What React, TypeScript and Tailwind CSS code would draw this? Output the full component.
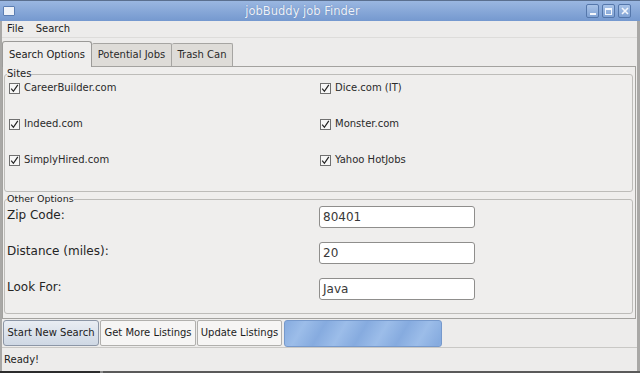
const sites = [
  ["CareerBuilder.com", "Dice.com (IT)"],
  ["Indeed.com", "Monster.com"],
  ["SimplyHired.com", "Yahoo HotJobs"],
];

const options = [
  { label: "Zip Code:", value: "80401" },
  { label: "Distance (miles):", value: "20" },
  { label: "Look For:", value: "Java" },
];

function CheckBox({ label }: { label: string }) {
  return (
    <label className="flex items-center gap-[4px] h-[16px] text-[10px] leading-[12px] text-[#2a2a2a]">
      <svg width="11" height="11" viewBox="0 0 11 11" className="shrink-0">
        <rect x="0.5" y="0.5" width="10" height="10" fill="#f7f7f7" stroke="#707070" />
        <path d="M2.2 5.6 L4.4 8.3 L8.8 1.8" fill="none" stroke="#222" strokeWidth="1.2" />
      </svg>
      {label}
    </label>
  );
}

function WinButton({ children }: { children: React.ReactNode }) {
  return (
    <div className="w-[13px] h-[14px] rounded-[2px] border border-[#5577ab] bg-linear-to-b from-[#a9c3e8] to-[#80a2d4] flex items-center justify-center">
      {children}
    </div>
  );
}

export default function App() {
  return (
    <div className="w-[640px] h-[373px] bg-[#edeceb] flex flex-col overflow-hidden font-['DejaVu_Sans',sans-serif] text-[#1c1c1c]">
      {/* title bar */}
      <div className="h-[21px] shrink-0 flex items-center bg-linear-to-b from-[#9ab7e1] to-[#7599cf] border-t border-[#5a6f8f] px-[3px]">
        <div className="w-[12px] h-[10px] border border-[#5b7eb3] bg-[#eef2f8] rounded-[1px]" />
        <div className="flex-1 text-center text-[11.5px] leading-[14px] text-[#eef2fa] [text-shadow:0_0_1px_#5a7aac] pl-[4px]">
          jobBuddy job Finder
        </div>
        <div className="flex gap-[3px] pr-[6px]">
          <WinButton>
            <div className="w-[6px] h-[2px] bg-[#f4f7fc] mt-[6px]" />
          </WinButton>
          <WinButton>
            <div className="w-[7px] h-[7px] border border-[#f4f7fc] border-t-2" />
          </WinButton>
          <WinButton>
            <svg width="8" height="8" viewBox="0 0 8 8">
              <path d="M1 1 L7 7 M7 1 L1 7" stroke="#f4f7fc" strokeWidth="1.6" />
            </svg>
          </WinButton>
        </div>
      </div>

      <div className="flex-1 flex flex-col border-l-2 border-r-[3px] border-[#a9a8a6]">
        {/* menu bar */}
        <div className="h-[17px] shrink-0 flex items-center gap-[12px] px-[5px] text-[10px] leading-[12px] border-b border-[#dddcda]">
          <span>File</span>
          <span>Search</span>
        </div>

        {/* tabs */}
        <div className="h-[28px] shrink-0 flex items-end text-[10px] leading-[12px]">
          <div className="h-[26px] w-[90px] bg-[#efeeed] border border-b-0 border-[#9b9a98] rounded-t-[3px] flex items-center justify-center relative top-[1px] z-10">
            Search Options
          </div>
          <div className="h-[23px] w-[80px] bg-[#dedcd8] border border-b-0 border-l-0 border-[#a6a5a2] rounded-t-[2px] flex items-center justify-center text-[#2a2a2a]">
            Potential Jobs
          </div>
          <div className="h-[23px] w-[61px] bg-[#dedcd8] border border-b-0 border-l-0 border-[#a6a5a2] rounded-t-[2px] flex items-center justify-center text-[#2a2a2a]">
            Trash Can
          </div>
        </div>

        {/* panel */}
        <div className="h-[253px] shrink-0 border border-[#a3a29f] mr-[1px] bg-[#efeeed] px-[1px] flex flex-col">
          <fieldset className="mt-[1px] mr-[1px] border border-[#bdbcb9] rounded-[3px] pl-[2px]">
            <legend className="text-[10px] leading-[12px] bg-[#efeeed] text-[#222]">Sites</legend>
            <div className="grid grid-cols-[311px_1fr] gap-y-[20px] pl-[2px] pb-[23px]">
              {sites.map(([a, b]) => (
                <>
                  <CheckBox key={a} label={a} />
                  <CheckBox key={b} label={b} />
                </>
              ))}
            </div>
          </fieldset>

          <fieldset className="mt-[1px] mr-[1px] border border-[#bdbcb9] rounded-[3px] pl-[2px]">
            <legend className="text-[9.5px] leading-[12px] bg-[#efeeed] text-[#222]">Other Options</legend>
            <div className="grid grid-cols-[312px_156px] gap-y-[14px] pt-[1px] pb-[13px]">
              {options.map((o) => (
                <>
                  <div key={o.label} className="text-[12px] leading-[14px] pt-[2px] text-[#252525]">
                    {o.label}
                  </div>
                  <div
                    key={o.value}
                    className="h-[22px] bg-white border border-[#8f8e8c] rounded-[3px] px-[3px] text-[12px] leading-[20px] text-[#383838]"
                  >
                    {o.value}
                  </div>
                </>
              ))}
            </div>
          </fieldset>
        </div>

        {/* button row */}
        <div className="h-[29px] shrink-0 flex items-center px-[1px] gap-[1px] text-[10px] leading-[12px] border-b border-[#c9c8c5]">
          <div className="h-[26px] w-[96px] rounded-[3px] border border-[#8c96a6] bg-linear-to-b from-[#e9edf3] to-[#cfd8e4] flex items-center justify-center">
            Start New Search
          </div>
          <div className="h-[26px] w-[96px] rounded-[2px] border border-[#b1b0ad] bg-[#f6f5f4] flex items-center justify-center">
            Get More Listings
          </div>
          <div className="h-[26px] w-[85px] rounded-[2px] border border-[#b1b0ad] bg-[#f6f5f4] flex items-center justify-center">
            Update Listings
          </div>
          <div className="ml-[1px] h-[27px] w-[158px] rounded-[3px] border border-[#7699cc] bg-[repeating-linear-gradient(120deg,#86abdf_0px,#9cbde9_18px,#86abdf_36px)]" />
        </div>

        {/* status */}
        <div className="h-[23px] shrink-0 flex items-center px-[2px] text-[10px] leading-[12px]">Ready!</div>
      </div>
      <div className="h-[2px] shrink-0 flex">
        <div className="w-[100px] bg-[#2c2c2c]" />
        <div className="w-[3px] bg-[#888]" />
        <div className="flex-1 bg-[#5a5a5a]" />
      </div>
    </div>
  );
}
